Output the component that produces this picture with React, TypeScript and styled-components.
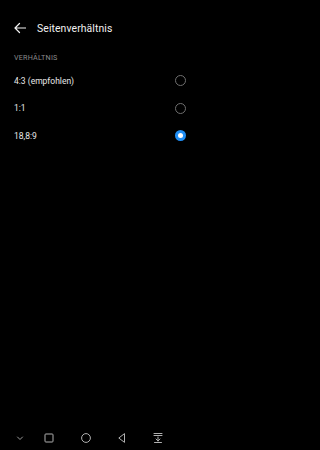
import React from "react";
import { useState } from "react";
import styled, { createGlobalStyle } from "styled-components";

const GlobalStyle = createGlobalStyle`
  html, body {
    margin: 0;
    padding: 0;
    background: #000000;
  }
  body {
    font-family: Roboto, "Noto Sans", "Liberation Sans", sans-serif;
    -webkit-font-smoothing: antialiased;
  }
`;

const Screen = styled.div`
  width: 208px;
  height: 450px;
  background: #000000;
  display: flex;
  flex-direction: column;
  overflow: hidden;
`;

const Header = styled.div`
  display: flex;
  align-items: center;
  height: 20px;
  margin-top: 18px;
  padding-left: 14px;
  gap: 11px;
`;

const BackButton = styled.div`
  width: 12px;
  height: 12px;
  display: flex;
  align-items: center;
  justify-content: center;
`;

const Title = styled.h1`
  margin: 0;
  font-size: 10.4px;
  font-weight: 400;
  color: #f2f2f2;
  letter-spacing: 0.1px;
`;

const SectionLabel = styled.p`
  margin: 14px 0 0 0;
  padding-left: 14px;
  height: 12px;
  line-height: 12px;
  font-size: 7.2px;
  color: #8a8a8a;
  letter-spacing: 0.2px;
`;

const List = styled.div`
  display: flex;
  flex-direction: column;
  margin-top: 3px;
`;

const Row = styled.div`
  height: 27.5px;
  display: flex;
  align-items: center;
  justify-content: space-between;
  padding: 0 22px 0 14px;
  cursor: pointer;
`;

const RowLabel = styled.span`
  font-size: 8.5px;
  color: #e8e8e8;
`;

const Radio = styled.div<{ $checked: boolean }>`
  width: 11px;
  height: 11px;
  box-sizing: border-box;
  border-radius: 50%;
  border: ${(p) => (p.$checked ? "none" : "1px solid #707070")};
  background: ${(p) => (p.$checked ? "#1f8ef5" : "transparent")};
  display: flex;
  align-items: center;
  justify-content: center;

  &::after {
    content: "";
    display: ${(p) => (p.$checked ? "block" : "none")};
    width: 5px;
    height: 5px;
    border-radius: 50%;
    background: #ffffff;
  }
`;

const NavBar = styled.div`
  margin-top: auto;
  height: 24px;
  padding-left: 8px;
  display: grid;
  grid-template-columns: 24px 34px 39px 34px 38px;
  align-items: center;
  justify-items: center;
`;

const NavSlot = styled.div`
  width: 12px;
  height: 12px;
  display: flex;
  align-items: center;
  justify-content: center;
`;

const options = ["4:3 (empfohlen)", "1:1", "18,8:9"];

const App = (): JSX.Element => {
  const [selected, setSelected] = useState(2);

  return (
    <>
      <GlobalStyle />
      <Screen>
        <Header>
          <BackButton>
            <svg width="12" height="12" viewBox="0 0 12 12" fill="none">
              <path
                d="M11.5 6H1M5.5 1.5L1 6l4.5 4.5"
                stroke="#f2f2f2"
                strokeWidth="1.2"
                strokeLinecap="round"
                strokeLinejoin="round"
              />
            </svg>
          </BackButton>
          <Title>Seitenverhältnis</Title>
        </Header>
        <SectionLabel>VERHÄLTNIS</SectionLabel>
        <List>
          {options.map((label, i) => (
            <Row key={label} onClick={() => setSelected(i)}>
              <RowLabel>{label}</RowLabel>
              <Radio $checked={selected === i} />
            </Row>
          ))}
        </List>
        <NavBar>
          <NavSlot>
            <svg width="12" height="12" viewBox="0 0 12 12" fill="none">
              <path d="M3.5 5l2.5 2.5L8.5 5" stroke="#9a9a9a" strokeWidth="1" strokeLinecap="round" strokeLinejoin="round" />
            </svg>
          </NavSlot>
          <NavSlot>
            <svg width="12" height="12" viewBox="0 0 12 12" fill="none">
              <rect x="2" y="2" width="8" height="8" rx="0.8" stroke="#b0b0b0" strokeWidth="1" />
            </svg>
          </NavSlot>
          <NavSlot>
            <svg width="12" height="12" viewBox="0 0 12 12" fill="none">
              <circle cx="6" cy="6" r="4.4" stroke="#b0b0b0" strokeWidth="1" />
            </svg>
          </NavSlot>
          <NavSlot>
            <svg width="12" height="12" viewBox="0 0 12 12" fill="none">
              <path d="M8.5 1.6v8.8L2.8 6z" stroke="#b0b0b0" strokeWidth="1" strokeLinejoin="round" />
            </svg>
          </NavSlot>
          <NavSlot>
            <svg width="12" height="12" viewBox="0 0 12 12" fill="none">
              <path
                d="M2 1.5h8M2 3.5h8M6 5v4M4 7l2 2 2-2M2.5 10.5h7"
                stroke="#b0b0b0"
                strokeWidth="1"
                strokeLinecap="round"
                strokeLinejoin="round"
              />
            </svg>
          </NavSlot>
        </NavBar>
      </Screen>
    </>
  );
};

export default App;
